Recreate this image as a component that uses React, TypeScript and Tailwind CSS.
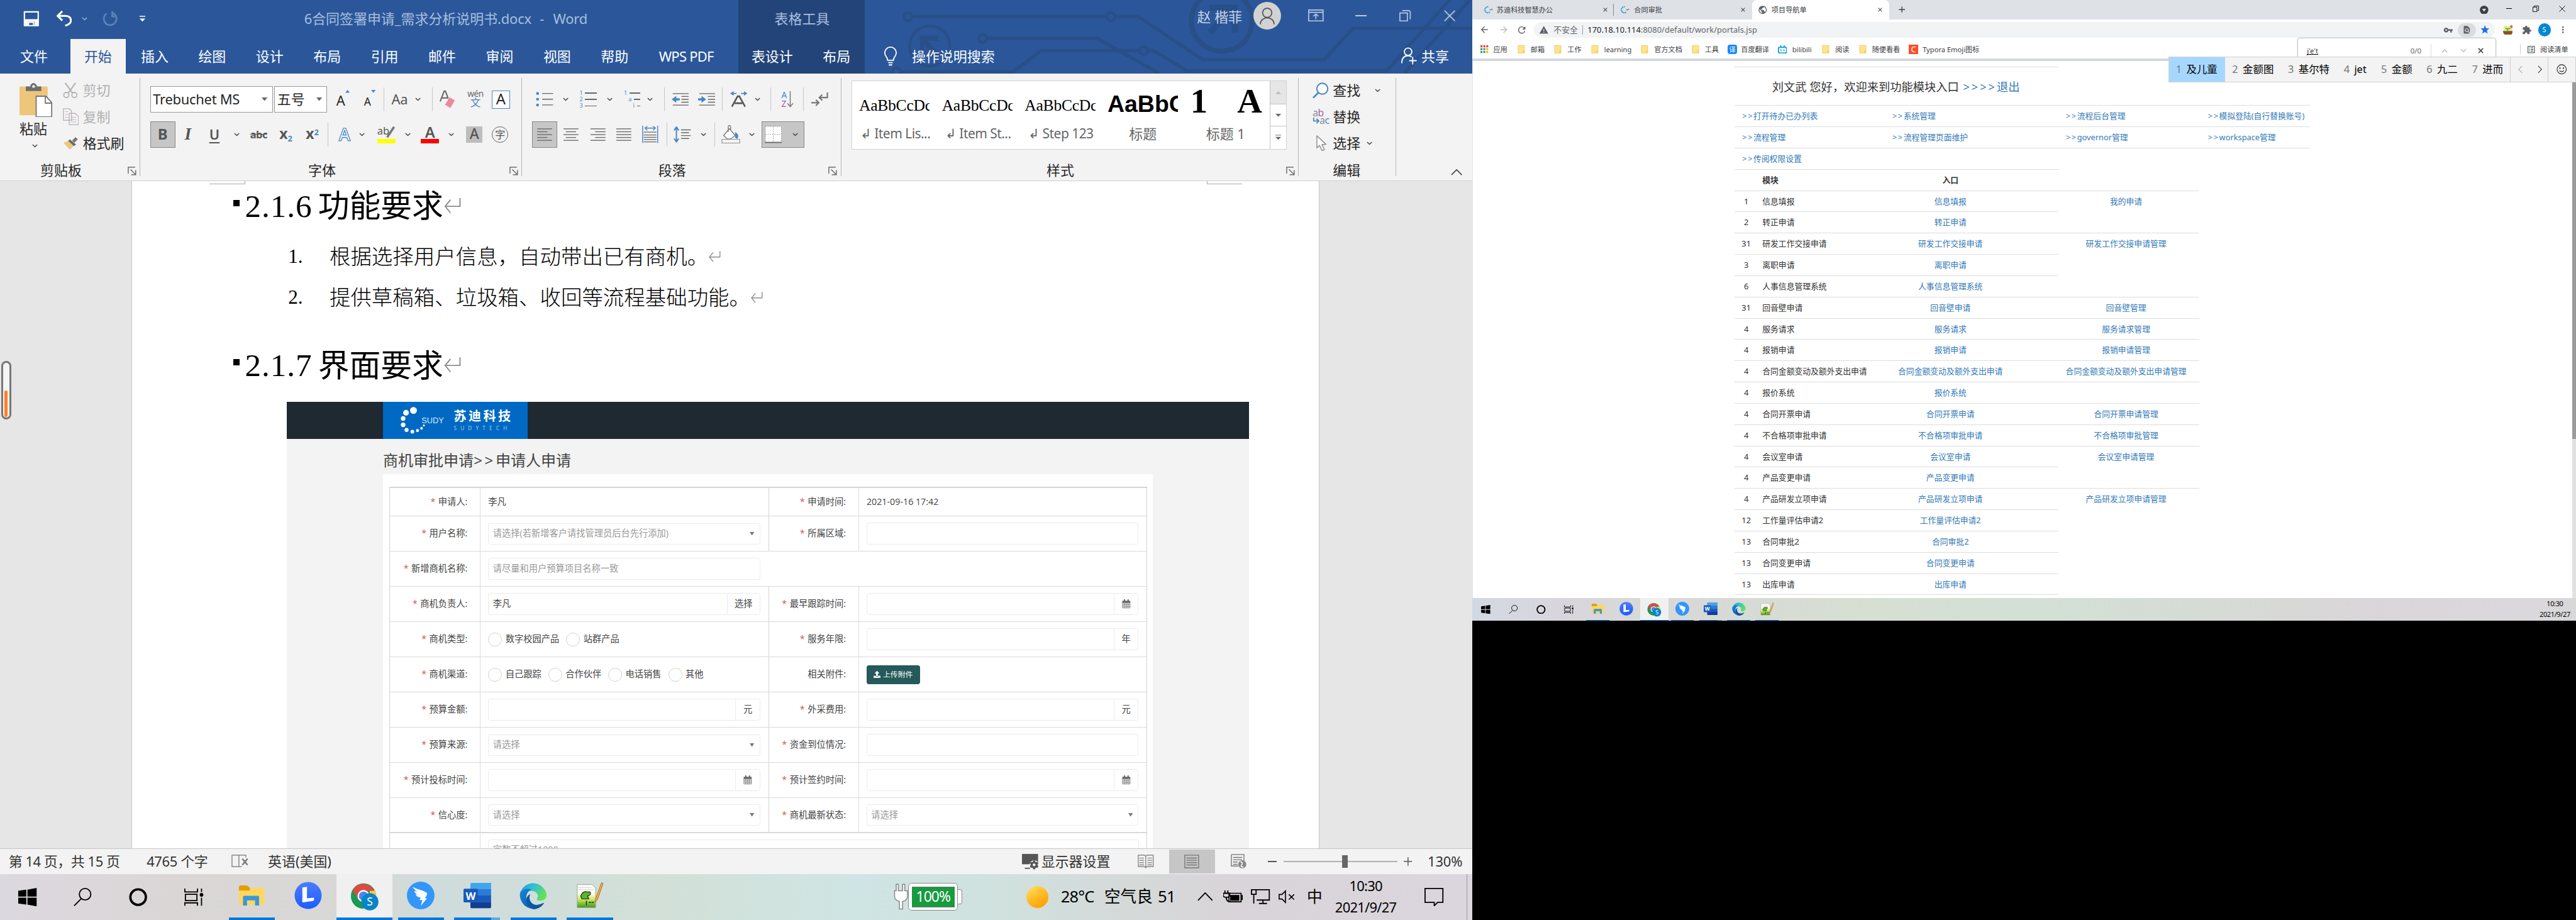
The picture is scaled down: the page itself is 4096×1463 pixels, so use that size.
import React from "react";
import {
  MdArrowBack, MdArrowForward, MdRefresh, MdWarning, MdVpnKey, MdFindInPage, MdStar,
  MdExtension, MdMoreVert, MdPublic, MdClose, MdAdd, MdOutlineListAlt,
} from "react-icons/md";
import { FaUpload, FaCog } from "react-icons/fa";

type Kids = { children?: React.ReactNode };

/** A fixed-width slot of a toolbar row. */
function C({ w, className = "", children }: Kids & { w: string; className?: string }) {
  return <div className={`${w} shrink-0 flex items-center whitespace-nowrap ${className}`}>{children}</div>;
}

function Svg({ w, h, vb, className = "", children }: Kids & { w: number; h: number; vb?: string; className?: string }) {
  return (
    <svg width={w} height={h} viewBox={vb ?? `0 0 ${w} ${h}`} fill="none" className={`shrink-0 ${className}`}>
      {children}
    </svg>
  );
}

const Chev = ({ c = "#444" }: { c?: string }) => (
  <Svg w={10} h={6}><path d="M1 1l4 4 4-4" stroke={c} strokeWidth="1.5" /></Svg>
);
const Launcher = () => (
  <Svg w={15} h={15}><path d="M1 12V1h12M5 5l8 8M14 6v8H6" stroke="#555" strokeWidth="1.4" /></Svg>
);
const VSep = () => <div className="h-[42px] w-[1px] bg-[#c6c6c6]" />;
const Return = ({ s }: { s: number }) => (
  <Svg w={s} h={s} vb="0 0 30 30"><path d="M28 2v14H3M12 5L3 16l9 11" stroke="#8c8c8c" strokeWidth="2" /></Svg>
);

/* ------------------------------------------------------------------ Word */

function Circuit() {
  return (
    <Svg w={1056} h={128} vb="1504 0 1056 128" className="absolute left-[1504px] top-0">
      <g stroke="#294f88" strokeWidth="6">
        <circle cx="1579" cy="29" r="7" strokeWidth="5" />
        <path d="M1586 29H1925M1939 29h41L2092 104H2303L2353 49H2560" />
        <circle cx="1932" cy="29" r="7" strokeWidth="5" />
        <circle cx="1709" cy="67" r="7" strokeWidth="5" />
        <path d="M1716 67H1909L2015 127" />
        <circle cx="1559" cy="125" r="7" strokeWidth="5" />
        <path d="M1566 125H1762L1811 88H1981M1997 88h9L2064 123H2412L2521 0M2443 127L2560 -4" />
        <circle cx="1989" cy="88" r="7" strokeWidth="5" />
        <circle cx="1617" cy="80" r="35" strokeWidth="5" />
        <circle cx="2125" cy="36" r="53" strokeWidth="9" />
      </g>
      <path d="M1600 62h32v9h-18l20 22-8 8-19-23v21h-7z" fill="#294f88" />
      <path d="M2103 8h50v49h-11V24l-34 37-8-8 32-34h-29z" fill="#294f88" />
    </Svg>
  );
}

function TitleBar() {
  return (
    <div className="relative h-[128px] bg-[#2b579a] text-white text-[24px] leading-none">
      <Circuit />
      <div className="absolute left-[1284px] top-0 h-[128px] w-[220px] bg-[#234478]" />
      <div className="relative flex h-[64px] pt-[2px]">
        <C w="w-[40px]" />
        <C w="w-[57px]">
          <Svg w={28} h={28}><path d="M2 2h24v24H2zM2 16h24M9 26v-6h9v6" stroke="#fff" strokeWidth="2.4" /><path d="M3 16h22v10h-5v-7H8v7H3z" fill="#fff" /></Svg>
        </C>
        <C w="w-[45px]">
          <Svg w={28} h={28}><path d="M3 9h13c7 0 10 4 10 8s-4 8-10 9M11 1L3 9l8 8" stroke="#fff" strokeWidth="3.4" /></Svg>
        </C>
        <C w="w-[35px]"><Chev c="#9db6da" /></C>
        <C w="w-[65px]">
          <Svg w={28} h={28}><path d="M19 4a11 11 0 1 1-11 1M18 1v9h8" stroke="#5c80b8" strokeWidth="3" /></Svg>
        </C>
        <C w="w-[287px]"><Svg w={12} h={12}><path d="M1 1h10" stroke="#fff" strokeWidth="1.6" /><path d="M1 5h10l-5 5z" fill="#fff" /></Svg></C>
        <C w="w-[818px]" className="text-[#a9bfdf]">
          6合同签署申请_需求分析说明书<span className="tracking-[-0.2px]">.docx</span><span className="whitespace-pre tracking-[1px]">{"  -  "}</span><span className="tracking-[-0.2px]">Word</span>
        </C>
        <C w="w-[735px]" className="text-[#a9bfdf]">表格工具</C>
        <C w="w-[98px]" className="text-[#c5d3e8] pb-2">赵 楷菲</C>
        <C w="w-[95px]" className="pb-3">
          <Svg w={48} h={48}><circle cx="24" cy="24" r="24" fill="#d2d2d2" /><circle cx="24" cy="19" r="8" stroke="#555" strokeWidth="2" /><path d="M12 39c0-15 24-15 24 0" stroke="#555" strokeWidth="2" /></Svg>
        </C>
        <C w="w-[82px]" className="pb-3"><Svg w={27} h={21}><path d="M1 1h25v19H1zM1 5h25M13.500 17V8M9 12l4.500-4 4.500 4" stroke="#b9cae4" strokeWidth="1.800" /></Svg></C>
        <C w="w-[77px]" className="pb-3"><div className="h-[2px] w-[20px] bg-[#b9cae4]" /></C>
        <C w="w-[77px]" className="pb-3"><Svg w={20} h={20}><path d="M1 5h13v14H1zM5 1h11q3 0 3 3v12" stroke="#b9cae4" strokeWidth="1.800" /></Svg></C>
        <C w="w-[30px]" className="pb-3"><Svg w={20} h={20}><path d="M1 1l18 18M19 1L1 19" stroke="#b9cae4" strokeWidth="1.800" /></Svg></C>
      </div>
      <div className="relative flex h-[64px] pt-[4px]">
        <C w="w-[122px]" className="pl-[35px]">文件</C>
        <C w="w-[97px]" className="justify-center bg-[#f3f3f3] text-[#2b579a]">开始</C>
        {["插入", "绘图", "设计", "布局", "引用", "邮件", "审阅", "视图", "帮助"].map((t) => (
          <C key={t} w="w-[100px]" className="justify-center">{t}</C>
        ))}
        <C w="w-[188px]" className="pl-[27px] tracking-[-0.8px]">WPS PDF</C>
        <C w="w-[124px]">表设计</C>
        <C w="w-[106px]">布局</C>
        <C w="w-[49px]">
          <Svg w={24} h={34}><path d="M7 24c0-6-5-7-5-13a10 10 0 0 1 20 0c0 6-5 7-5 13zM8 28h8M9 32h6" stroke="#fff" strokeWidth="2" /></Svg>
        </C>
        <C w="w-[851px]">操作说明搜索</C>
        <C w="w-[35px]">
          <Svg w={28} h={31}><circle cx="12" cy="8" r="6.500" stroke="#fff" strokeWidth="2" /><path d="M1 28c0-9 4-13 11-13 3 0 5 1 6 2M20 17v13M14 23.500h13" stroke="#fff" strokeWidth="2" /></Svg>
        </C>
        <C w="w-[60px]">共享</C>
      </div>
    </div>
  );
}

function Group({ w, label, labelPad, launcher, children }: Kids & { w: string; label: string; labelPad: string; launcher?: string }) {
  return (
    <div className={`${w} shrink-0 flex`}>
      <div className="flex-1 flex flex-col relative">
        <div className="h-[151px] flex flex-col">{children}</div>
        <div className={`h-[34px] flex items-center ${labelPad}`}>{label}</div>
        {launcher && <div className={`absolute bottom-[9px] ${launcher}`}><Launcher /></div>}
      </div>
      <div className="my-2 w-[1px] bg-[#b4b4b4]" />
    </div>
  );
}

function Lines({ n, align = "l" }: { n: number; align?: string }) {
  const widths = [26, 18, 26, 18, 26];
  return (
    <Svg w={26} h={22}>
      {widths.slice(0, n).map((lw, i) => {
        const len = align === "j" ? 26 : lw;
        const x = align === "l" || align === "j" ? 0 : align === "c" ? (26 - len) / 2 : 26 - len;
        return <path key={i} d={`M${x} ${1 + i * 5}h${len}`} stroke="#6a6a6a" strokeWidth="1.5" />;
      })}
    </Svg>
  );
}

function Ribbon() {
  return (
    <div className="flex h-[187px] bg-[#f3f3f3] border-b-2 border-[#cfcfcf] text-[24px] leading-none text-[#262626]">
      <Group w="w-[244px]" label="剪贴板" labelPad="pl-[70px]" launcher="right-[6px]">
        <div className="flex pt-[6px]">
          <div className="w-[109px] pl-[34px] flex flex-col pt-[10px]">
            <Svg w={58} h={60}>
              <rect x="0" y="6" width="49" height="50" rx="2" fill="#eec67b" />
              <path d="M11 6h8v-2q5-8 11 0v2h8v8H11z" fill="#6d6d6d" /><circle cx="24.500" cy="6" r="2.500" fill="#eee" />
              <path d="M29 23h17l10 11v25H29z" fill="#fff" stroke="#777" strokeWidth="2" /><path d="M45 23v12h11" stroke="#777" strokeWidth="2" />
            </Svg>
            <div className="mt-2">粘贴</div>
            <div className="mt-[15px] pl-[22px]"><Chev /></div>
          </div>
          <div>
            <div className="flex h-[46px] items-center text-[#b0b0b0]">
              <C w="w-[35px]"><Svg w={26} h={28}><path d="M4 1l13 18M22 1L9 19" stroke="#b5b5b5" strokeWidth="2.500" /><circle cx="6" cy="22" r="4.500" stroke="#b5b5b5" strokeWidth="2" /><circle cx="20" cy="22" r="4.500" stroke="#b5b5b5" strokeWidth="2" /></Svg></C>剪切
            </div>
            <div className="flex h-[46px] items-center text-[#b0b0b0]">
              <C w="w-[35px]"><Svg w={28} h={30}><path d="M1 1h10l4 4v16H1zM11 9h10l6 5v15H11z" fill="#f5f2f5" stroke="#b9b3b9" strokeWidth="1.500" /><path d="M4 6h5M4 11h5M4 16h5M14 16h9M14 20h9M14 24h9" stroke="#b9b3b9" /></Svg></C>复制
            </div>
            <div className="flex h-[46px] items-center">
              <C w="w-[35px]"><Svg w={28} h={24}><path d="M16 7l6-6 4 4-6 6z" fill="#777" /><path d="M12 5l11 9-4 3-10-9z" fill="#6d6d6d" /><path d="M1 11l8-3 9 9-6 6z" fill="#eec67b" /></Svg></C>格式刷
            </div>
          </div>
        </div>
      </Group>

      <Group w="w-[664px]" label="字体" labelPad="pl-[292px]" launcher="right-[6px]">
        <div className="mt-[22px] flex h-[46px]">
          <C w="w-[17px]" />
          <C w="w-[216px]">
            <div className="flex h-[46px] w-[214px] items-center justify-between border-2 border-[#999] bg-white pl-1 pr-[9px]">
              <span className="tracking-[-0.3px]">Trebuchet MS</span><Svg w={10} h={6}><path d="M0 0h10l-5 6z" fill="#666" /></Svg>
            </div>
          </C>
          <C w="w-[108px]">
            <div className="flex h-[46px] w-[92px] items-center justify-between border-2 border-[#999] bg-white pl-1 pr-[8px]">
              五号<Svg w={10} h={6}><path d="M0 0h10l-5 6z" fill="#666" /></Svg>
            </div>
          </C>
          <C w="w-[48px]"><span className="text-[24px] pt-1">A</span><Svg w={8} h={5} className="-mt-7"><path d="M0 5h8l-4-5z" fill="#4a86c5" /></Svg></C>
          <C w="w-[34px]"><span className="text-[19px] pt-2">A</span><Svg w={8} h={5} className="-mt-7"><path d="M0 0h8l-4 5z" fill="#4a86c5" /></Svg></C>
          <C w="w-[14px]"><VSep /></C>
          <C w="w-[41px]" className="text-[#555]"><span className="text-[24px] tracking-[-0.5px]">Aa</span></C>
          <C w="w-[29px]"><Chev /></C>
          <C w="w-[14px]"><VSep /></C>
          <C w="w-[48px]"><Svg w={32} h={34}><path d="M1 20L8 2h2l7 18M4 14h10" stroke="#666" strokeWidth="2.200" /><path d="M17 12l10 6-8 14-10-6z" fill="#ea8a9c" stroke="#f3f3f3" /></Svg></C>
          <C w="w-[42px]"><div className="flex flex-col items-center text-[#666]"><span className="text-[15px] leading-[12px] tracking-[-0.5px]">wén</span><span className="text-[18px] leading-[18px] text-[#4a86c5]">文</span></div></C>
          <C w="w-[32px]"><div className="flex h-[32px] w-[32px] items-center justify-center border-2 border-[#4a86c5] bg-white text-[26px]">A</div></C>
        </div>
        <div className="mt-[15px] flex h-[46px] text-[#555]">
          <C w="w-[17px]" />
          <C w="w-[60px]"><div className="flex h-[46px] w-[44px] items-center justify-center border-2 border-[#888] bg-[#c6c6c6] text-[26px] font-bold">B</div></C>
          <C w="w-[43px]"><span className="font-['Liberation_Serif'] italic font-bold text-[30px]">I</span></C>
          <C w="w-[43px]"><span className="text-[24px] font-semibold underline decoration-2 underline-offset-4">U</span></C>
          <C w="w-[28px]"><Chev /></C>
          <C w="w-[51px]"><span className="text-[18px] font-bold line-through tracking-[-0.5px]">abc</span></C>
          <C w="w-[46px]"><span className="text-[25px] font-bold">x<sub className="text-[14px] text-[#4a86c5]">2</sub></span></C>
          <C w="w-[38px]"><span className="text-[25px] font-bold">x<sup className="text-[14px] text-[#4a86c5]">2</sup></span></C>
          <C w="w-[17px]"><VSep /></C>
          <C w="w-[38px]"><Svg w={24} h={26}><path d="M2 24L10 2h4l8 22h-4l-2-6H8l-2 6zM9 14h6l-3-8z" fill="#fff" stroke="#4a86c5" strokeWidth="1.500" /></Svg></C>
          <C w="w-[31px]"><Chev /></C>
          <C w="w-[48px]"><div className="w-[32px]"><div className="relative h-[23px] text-[18px]">ab<Svg w={18} h={22} className="absolute right-0 top-0"><path d="M16 2L4 20" stroke="#777" strokeWidth="4" /></Svg></div><div className="h-[8px] bg-[#ff0]" /></div></C>
          <C w="w-[28px]"><Chev /></C>
          <C w="w-[48px]"><div className="w-[32px] text-center"><div className="h-[23px] text-[26px] leading-[22px] font-semibold">A</div><div className="h-[8px] bg-[#f00]" /></div></C>
          <C w="w-[31px]"><Chev /></C>
          <C w="w-[45px]"><div className="flex h-[28px] w-[28px] items-center justify-center bg-[#bdbdbd] text-[25px] font-medium">A</div></C>
          <C w="w-[30px]"><div className="flex h-[28px] w-[28px] items-center justify-center rounded-full border-[1.5px] border-[#666] text-[18px]">字</div></C>
        </div>
      </Group>

      <Group w="w-[555px]" label="段落" labelPad="pl-[237px]" launcher="right-[6px]">
        <div className="mt-[22px] flex h-[46px]">
          <C w="w-[24px]" />
          <C w="w-[47px]"><Svg w={30} h={28}><path d="M11 4h19M11 14h19M11 24h19" stroke="#666" strokeWidth="1.500" /><circle cx="3" cy="4" r="2.500" fill="#4a86c5" /><circle cx="3" cy="14" r="2.500" fill="#4a86c5" /><circle cx="3" cy="24" r="2.500" fill="#4a86c5" /></Svg></C>
          <C w="w-[29px]"><Chev /></C>
          <C w="w-[47px]"><div className="flex flex-col gap-[2px] text-[10px] leading-[9px] text-[#4a86c5]">{["1", "2", "3"].map((n) => <div key={n} className="flex items-center gap-1">{n}<span className="h-[1.5px] w-[20px] bg-[#666]" /></div>)}</div></C>
          <C w="w-[30px]"><Chev /></C>
          <C w="w-[41px]"><div className="flex flex-col gap-[2px] text-[10px] leading-[9px] text-[#4a86c5]"><div className="flex items-center gap-1">1<span className="h-[1.5px] w-[19px] bg-[#666]" /></div><div className="flex items-center gap-1 pl-[8px]">a<span className="h-[1.5px] w-[11px] bg-[#666]" /></div><div className="flex items-center gap-1 pl-[16px]">i<span className="h-[1.5px] w-[6px] bg-[#666]" /></div></div></C>
          <C w="w-[29px]"><Chev /></C>
          <C w="w-[13px]"><VSep /></C>
          <C w="w-[46px]"><Svg w={30} h={24}><path d="M2 2h28M17 7h13M17 12h13M17 17h13M2 22h28" stroke="#666" strokeWidth="1.500" /><path d="M0 12l8-6v4h6v4H8v4z" fill="#4a86c5" /></Svg></C>
          <C w="w-[42px]"><Svg w={30} h={24}><path d="M2 2h28M17 7h13M17 12h13M17 17h13M2 22h28" stroke="#666" strokeWidth="1.500" /><path d="M14 12L6 6v4H0v4h6v4z" fill="#4a86c5" /></Svg></C>
          <C w="w-[14px]"><VSep /></C>
          <C w="w-[43px]"><Svg w={30} h={30}><path d="M3 28l10-18h3l10 18M8 22h13" stroke="#555" strokeWidth="2.800" /><path d="M0 5l6-4v8zM30 5l-6-4v8z" fill="#4a86c5" /><path d="M4 5h7M19 5h7" stroke="#4a86c5" strokeWidth="2" /></Svg></C>
          <C w="w-[27px]"><Chev /></C>
          <C w="w-[19px]"><VSep /></C>
          <C w="w-[38px]"><div className="flex items-center"><div className="flex flex-col text-[15px] leading-[15px]"><span className="text-[#4a86c5]">A</span><span className="text-[#9b5fb5]">Z</span></div><Svg w={12} h={28}><path d="M6 0v26M1 21l5 6 5-6" stroke="#777" strokeWidth="1.600" /></Svg></div></C>
          <C w="w-[14px]"><VSep /></C>
          <C w="w-[30px]"><Svg w={30} h={26}><path d="M28 1v9H14M19 5l-5 5 5 5M0 19h12M8 14l5 5-5 5" stroke="#777" strokeWidth="2.400" /></Svg></C>
        </div>
        <div className="mt-[15px] flex h-[46px]">
          <C w="w-[17px]" />
          <C w="w-[55px]"><div className="flex h-[46px] w-[44px] items-center justify-center border-2 border-[#888] bg-[#c6c6c6]"><Lines n={5} /></div></C>
          <C w="w-[47px]"><Lines n={5} align="c" /></C>
          <C w="w-[45px]"><Lines n={5} align="r" /></C>
          <C w="w-[45px]"><Lines n={5} align="j" /></C>
          <C w="w-[42px]"><Svg w={28} h={30}><path d="M3 11h22M3 16h22M3 20h22M3 24h22M3 28h22" stroke="#666" strokeWidth="1.400" /><path d="M1 0v30M27 0v30M5 4h18M9 1L5 4l4 4M19 1l4 3-4 4" stroke="#4a86c5" strokeWidth="1.600" /></Svg></C>
          <C w="w-[13px]"><VSep /></C>
          <C w="w-[47px]"><Svg w={30} h={28}><path d="M13 6h17M13 11h14M13 16h17M13 21h14" stroke="#666" strokeWidth="1.500" /><path d="M5 2v24M1 7l4-6 4 6M1 21l4 6 4-6" stroke="#4a86c5" strokeWidth="2.200" /></Svg></C>
          <C w="w-[24px]"><Chev /></C>
          <C w="w-[12px]"><VSep /></C>
          <C w="w-[48px]"><Svg w={34} h={32}><path d="M4 18L14 6l10 12-8 6H10zM12 12V2q2-3 4 0v6" fill="#fff" stroke="#777" strokeWidth="1.500" /><path d="M24 12q8 4 4 12l-4-2z" fill="#4a86c5" /><path d="M1 25h31v6H1z" fill="#fff" stroke="#999" strokeWidth="1.500" /></Svg></C>
          <C w="w-[22px]"><Chev /></C>
          <C w="w-[75px]"><div className="flex h-[46px] w-[74px] items-center justify-between border-2 border-[#888] bg-[#c6c6c6] pl-1 pr-[10px]"><Svg w={30} h={30}><path d="M1 1h28v28H1z" fill="#fff" /><path d="M1 1h28M1 1v28M29 1v28M15 1v28M1 15h28" stroke="#888" strokeDasharray="2 2" /><path d="M0 29h30" stroke="#666" strokeWidth="2" /></Svg><Chev /></div></C>
        </div>
      </Group>

      <Group w="w-[796px]" label="样式" labelPad="pl-[357px]" launcher="right-[6px]">
        <div className="ml-[18px] mt-[12px] flex h-[120px] w-[757px] border-2 border-[#d2d2d2] bg-white">
          <div className="flex flex-1 pl-[12px]">
            {[
              { s: "AaBbCcDc", l: "↲ Item Lis..." },
              { s: "AaBbCcDc", l: "↲ Item St..." },
              { s: "AaBbCcDc", l: "↲ Step 123" },
            ].map((x) => (
              <div key={x.l} className="w-[144px] shrink-0">
                <div className="flex h-[68px] w-[123px] items-end overflow-hidden pb-[10px] font-['Liberation_Serif'] text-[28px] leading-[32px] tracking-[-0.3px] text-black">{x.s}</div>
                <div className="flex h-[47px] w-[126px] items-center justify-center whitespace-nowrap text-[23px] tracking-[-0.6px] text-[#666]">{x.l}</div>
              </div>
            ))}
            <div className="w-[144px] shrink-0">
              <div className="flex h-[68px] w-[123px] items-end overflow-hidden pb-[6px] font-['Liberation_Sans'] text-[41px] font-bold leading-[46px] text-black">AaBbC</div>
              <div className="flex h-[47px] w-[123px] items-center justify-center text-[#666]">标题</div>
            </div>
            <div className="w-[136px] shrink-0">
              <div className="flex h-[68px] w-[125px] items-end justify-between font-['Liberation_Serif'] text-[60px] font-bold leading-[66px] text-black"><span>1</span><span>A</span></div>
              <div className="flex h-[47px] w-[123px] items-center justify-center text-[#666]">标题 1</div>
            </div>
          </div>
          <div className="flex w-[29px] shrink-0 flex-col border-l border-[#c4c4c4]">
            <div className="flex h-[41px] items-center justify-center border-b border-[#c4c4c4] bg-[#e6e6e6]"><Svg w={10} h={5}><path d="M0 5h10L5 0z" fill="#bbb" /></Svg></div>
            <div className="flex h-[38px] items-center justify-center border-b border-[#c4c4c4]"><Svg w={10} h={5}><path d="M0 0h10L5 5z" fill="#666" /></Svg></div>
            <div className="flex flex-1 items-center justify-center"><Svg w={10} h={10}><path d="M0 1h10" stroke="#666" /><path d="M0 4h10L5 9z" fill="#666" /></Svg></div>
          </div>
        </div>
      </Group>

      <Group w="w-[169px]" label="编辑" labelPad="pl-[59px]">
        <div className="pl-[24px] pt-[6px]">
          <div className="flex h-[46px]">
            <C w="w-[35px]"><Svg w={28} h={28}><circle cx="17" cy="11" r="9.500" fill="#fff" stroke="#4a86c5" strokeWidth="2.200" /><path d="M10 18L1 27" stroke="#4a86c5" strokeWidth="3" /></Svg></C>
            <C w="w-[73px]">查找</C><C w="w-[10px]"><Chev /></C>
          </div>
          <div className="flex h-[46px]">
            <C w="w-[35px]"><div className="text-[17px] leading-[13px] tracking-[-0.5px]"><div className="text-[#888]">a<span className="text-[#9b5fb5]">b</span></div><div className="text-[#888] flex"><Svg w={12} h={13}><path d="M2 1v6h8M7 3l4 4-4 4" stroke="#4a86c5" strokeWidth="2" /></Svg>a<span className="text-[#4a86c5]">c</span></div></div></C>
            <C w="w-[73px]">替换</C>
          </div>
          <div className="flex h-[46px]">
            <C w="w-[35px]" className="pl-[6px]"><Svg w={18} h={28}><path d="M1 1v21l5-4 4 9 4-2-4-9h7z" fill="#fff" stroke="#888" strokeWidth="1.500" /></Svg></C>
            <C w="w-[59px]">选择</C><C w="w-[10px]"><Chev /></C>
          </div>
        </div>
      </Group>
      <div className="flex flex-1 items-end justify-end pb-[9px] pr-[17px]"><Svg w={20} h={11}><path d="M1 10l9-9 9 9" stroke="#444" strokeWidth="1.800" /></Svg></div>
    </div>
  );
}

/* -------------------------------------------------- Form in the document */

type Ctl =
  | { k: "text"; v: string }
  | { k: "select"; v: string }
  | { k: "input"; v?: string; suffix?: React.ReactNode; sw?: string }
  | { k: "radio"; v: string[] }
  | { k: "upload" }
  | { k: "none" };

const Cal = () => (
  <Svg w={15} h={16}>
    <path d="M1 3h13v12H1zM1 6.500h13M4.300 6v9M7.500 6v9M10.700 6v9M1 9.500h13M1 12.300h13" stroke="#777" strokeWidth="1" />
    <path d="M1 3h13v3H1z" fill="#666" /><path d="M4.300 0v4M10.700 0v4" stroke="#666" strokeWidth="2" />
  </Svg>
);

function Control({ c }: { c: Ctl }) {
  switch (c.k) {
    case "text":
      return <span>{c.v}</span>;
    case "select":
      return (
        <div className="flex h-[37px] w-[473px] items-center justify-between rounded border border-[#ebebeb] pl-[7px] pr-[9px] text-[#999]">
          {c.v}<Svg w={8} h={6}><path d="M0 0h8l-4 6z" fill="#777" /></Svg>
        </div>
      );
    case "input":
      return (
        <div className="flex h-[38px] w-[473px] rounded border border-[#ebebeb]">
          <div className={`flex flex-1 items-center pl-[7px] ${c.v === "李凡" ? "text-[#444]" : "text-[#999]"}`}>{c.v}</div>
          {c.suffix && <div className={`flex items-center justify-center border-l border-[#ebebeb] ${c.sw ?? "w-[42px]"}`}>{c.suffix}</div>}
        </div>
      );
    case "radio":
      return (
        <div className="flex items-center gap-[12px]">
          {c.v.map((t) => (
            <div key={t} className="flex items-center gap-[6px]"><span className="h-[24px] w-[24px] rounded-full border-2 border-[#d3d3cc] bg-white" />{t}</div>
          ))}
        </div>
      );
    case "upload":
      return (
        <div className="flex h-[33px] w-[93px] items-center justify-center gap-1 rounded bg-[#25595a] text-[13px] text-white"><FaUpload className="h-[12px] w-[12px]" />上传附件</div>
      );
    default:
      return null;
  }
}

function Label({ t, req = true }: { t: string; req?: boolean }) {
  return (
    <div className="flex items-center justify-end border-r border-[#ddd] pr-[22px]">
      {req && <span className="mr-[5px] text-[#d9534f]">*</span>}{t}:
    </div>
  );
}

const FORM: [string, Ctl, string, Ctl][] = [
  ["申请人", { k: "text", v: "李凡" }, "申请时间", { k: "text", v: "2021-09-16 17:42" }],
  ["用户名称", { k: "select", v: "请选择(若新增客户请找管理员后台先行添加)" }, "所属区域", { k: "input" }],
  ["新增商机名称", { k: "input", v: "请尽量和用户预算项目名称一致" }, "", { k: "none" }],
  ["商机负责人", { k: "input", v: "李凡", suffix: "选择", sw: "w-[57px]" }, "最早跟踪时间", { k: "input", suffix: <Cal /> }],
  ["商机类型", { k: "radio", v: ["数字校园产品", "站群产品"] }, "服务年限", { k: "input", suffix: "年" }],
  ["商机渠道", { k: "radio", v: ["自己跟踪", "合作伙伴", "电话销售", "其他"] }, "相关附件", { k: "upload" }],
  ["预算金额", { k: "input", suffix: "元" }, "外采费用", { k: "input", suffix: "元" }],
  ["预算来源", { k: "select", v: "请选择" }, "资金到位情况", { k: "input" }],
  ["预计投标时间", { k: "input", suffix: <Cal /> }, "预计签约时间", { k: "input", suffix: <Cal /> }],
  ["信心度", { k: "select", v: "请选择" }, "商机最新状态", { k: "select", v: "请选择" }],
];

const DOTS = [[53, 15, 6], [40, 19, 5], [35, 29, 4], [35, 40, 4], [41, 49, 3.5], [51, 52, 3.2], [60, 50, 2.7], [67, 46, 2.3], [71, 41, 1.7]];

function Form() {
  return (
    <div className="ml-[269px] h-[900px] w-[1673px] bg-[#f3f3f3] font-['Open_Sans','Noto_Sans_CJK_SC',sans-serif] text-[#444]">
      <div className="flex h-[64px] bg-[#1f2932]">
        <div className="relative ml-[167px] flex w-[252px] bg-[#0069c3] text-white">
          <Svg w={80} h={64} className="absolute left-0 top-0">{DOTS.map(([x, y, r]) => <circle key={`${x}-${y}`} cx={x} cy={y} r={r} fill="#fff" />)}</Svg>
          <div className="w-[123px] pl-[67px] pt-[26px] font-['Liberation_Sans'] text-[14px] leading-none text-[#dcebfa]">SUDY</div>
          <div className="pt-[14px] leading-none">
            <div className="text-[22px] font-bold tracking-[3.700px]">苏迪科技</div>
            <div className="pt-[5px] text-[9px] tracking-[6.800px] text-[#a5cdf2]">SUDYTECH</div>
          </div>
        </div>
      </div>
      <div className="flex h-[62px] items-center pl-[167px] pt-[14px] text-[26.300px]">商机审批申请<span className="tracking-[4px]">&gt;&gt;</span>申请人申请</div>
      <div className="ml-[167px] h-[800px] w-[1339px] bg-white pl-[11px] pt-[22px] text-[15.600px] leading-none">
        <div className="w-[1318px] border-x border-t-[3px] border-[#d5d5d5]">
          {FORM.map(([a, ca, b, cb], i) => (
            <div key={a} className={`grid grid-cols-[158px_501px_157px_500px] border-b border-[#d9d9d9] ${i === 0 ? "h-[49px]" : "h-[61.250px]"} ${i === 9 ? "border-b-[3px]" : ""}`}>
              <Label t={a} />
              <div className={`flex items-center pl-[13px] ${b ? "border-r border-[#d5d5d5]" : ""}`}><Control c={ca} /></div>
              {b && <Label t={b} req={b !== "相关附件"} />}
              {b && <div className="flex items-center pl-[13px]"><Control c={cb} /></div>}
            </div>
          ))}
          <div className="grid h-[200px] grid-cols-[158px_1fr]">
            <div className="border-r border-[#ddd]" />
            <div className="px-[13px] pt-[11px]"><div className="h-[180px] rounded border border-[#ebebeb] pl-[7px] pt-[9px] text-[#999]">字数不超过1000</div></div>
          </div>
        </div>
      </div>
    </div>
  );
}

function Heading({ n, t }: { n: string; t: string }) {
  return (
    <div className="flex h-[76px] items-center pl-[176px] text-black leading-none">
      <div className="mb-[9px] mr-[9px] h-[11px] w-[11px] bg-black" />
      <span className="w-[127px] font-['Liberation_Serif'] text-[56px] tracking-[1px]">{n}</span>
      <span className="text-[54.500px] font-normal">{t}</span><Return s={31} />
    </div>
  );
}

function Document() {
  return (
    <div className="relative flex h-[1161px] overflow-hidden bg-[#e6e6e6]">
      <div className="absolute left-[2px] top-[313px] h-[102px] w-[18px] rounded-full border-4 border-[#777] bg-[#f5f5f5]">
        <div className="absolute bottom-[1px] left-[2px] h-[46px] w-[6px] rounded-full bg-[#ff7f27]" />
      </div>
      <div className="ml-[229px] h-full w-[2066px] shrink-0 border-x border-[#c8c8c8] bg-white">
        <div className="flex h-[5px]">
          <div className="ml-[134px] w-[63px] border-b border-r border-[#aaa]" />
          <div className="ml-[1672px] w-[61px] border-b border-l border-[#aaa]" />
        </div>
        <Heading n="2.1.6" t="功能要求" />
        <div className="text-[36.600px] font-light leading-none text-black">
          <div className="flex h-[100px] items-center pl-[271px]"><span className="w-[72px] font-['Liberation_Serif'] text-[34px]">1.</span>根据选择用户信息，自动带出已有商机。<Return s={22} /></div>
          <div className="flex h-[42px] items-center pl-[271px]"><span className="w-[72px] font-['Liberation_Serif'] text-[34px]">2.</span>提供草稿箱、垃圾箱、收回等流程基础功能。<Return s={22} /></div>
        </div>
        <div className="mt-[59px]"><Heading n="2.1.7" t="界面要求" /></div>
        <div className="mt-[26px]"><Form /></div>
      </div>
    </div>
  );
}

function StatusBar() {
  return (
    <div className="flex h-[44px] border-t-2 border-[#c6c6c6] bg-[#f3f3f3] text-[24px] leading-none text-[#333]">
      <C w="w-[15px]" />
      <C w="w-[240px]"><span className="tracking-[-0.5px]">第 14 页，共 15 页</span></C>
      <C w="w-[147px]"><span className="tracking-[-0.4px]">4765 个字</span></C>
      <C w="w-[64px]"><Svg w={30} h={24}><path d="M1 1h12v20H1zM13 1h12v4M13 21h5" stroke="#777" strokeWidth="1.400" /><path d="M19 7l9 11M28 7l-9 11" stroke="#777" strokeWidth="2.600" /></Svg></C>
      <C w="w-[1311px]">英语(美国)</C>
      <C w="w-[34px]"><div className="relative"><Svg w={30} h={28}><path d="M0 1h28v18H0z" fill="#555" /><path d="M5 26h9" stroke="#555" strokeWidth="2" /></Svg><FaCog className="absolute bottom-0 right-0 h-[16px] w-[16px] rounded-full bg-[#f3f3f3] text-[#555]" /></div></C>
      <C w="w-[168px]">显示器设置</C>
      <C w="w-[54px]"><Svg w={28} h={24}><path d="M1 1h11l2 2 2-2h11v20H16l-2 2-2-2H1zM14 3v20M3 6h8M3 10h8M3 14h8M3 18h8M17 6h8M17 10h8M17 14h8M17 18h8" stroke="#777" strokeWidth="1.300" /></Svg></C>
      <C w="w-[107px]"><div className="flex h-[42px] w-[80px] items-center justify-center bg-[#c6c6c6]"><Svg w={26} h={24}><path d="M1 1h24v22H1zM4 6h18M4 10h18M4 14h18M4 18h18" stroke="#777" strokeWidth="1.500" /></Svg></div></C>
      <C w="w-[65px]"><Svg w={28} h={26}><path d="M1 1h22v11M1 1v20h12M4 6h16M4 10h16M4 14h8M4 18h8" stroke="#777" strokeWidth="1.500" /><circle cx="20" cy="18" r="7" fill="#888" /><path d="M17 13q5 3 2 6t3 4" stroke="#eee" strokeWidth="2" /></Svg></C>
      <C w="w-[27px]"><div className="h-[2px] w-[15px] bg-[#555]" /></C>
      <C w="w-[209px]"><div className="flex h-[22px] w-[198px] items-center"><div className="h-[2px] w-[102px] bg-[#b0b0b0]" /><div className="h-[22px] w-[10px] bg-[#666]" /><div className="h-[2px] flex-1 bg-[#b0b0b0]" /></div></C>
      <C w="w-[42px]"><Svg w={15} h={15}><path d="M0 7.500h15M7.500 0v15" stroke="#555" strokeWidth="1.600" /></Svg></C>
      <C w="w-[65px]"><span className="tracking-[-0.2px]">130%</span></C>
    </div>
  );
}

/* --------------------------------------------------------------- Taskbar */

function Task({ on, active, twin, children }: Kids & { on?: boolean; active?: boolean; twin?: boolean }) {
  return (
    <div className={`flex w-[98px] shrink-0 flex-col items-center ${active ? "bg-[#f0f0f0]" : ""}`}>
      <div className="flex h-[76px] flex-1 items-center justify-center">{children}</div>
      <div className={`flex h-[4px] justify-end ${active ? "w-[98px]" : "w-[80px]"} ${on ? "bg-[#0078d7]" : ""}`}>
        {twin && <div className="h-full w-[16px] bg-[#5fa8e0]" />}
      </div>
    </div>
  );
}

function TaskIcons() {
  return (
    <>
      <C w="w-[96px]" className="justify-center"><Svg w={32} h={32}><path d="M0 5l14-2v12H0zM16 3l16-3v15H16zM0 17h14v12L0 27zM16 17h16v15l-16-3z" fill="#000" /></Svg></C>
      <C w="w-[96px]" className="justify-center"><Svg w={32} h={32}><circle cx="20" cy="11" r="10" stroke="#000" strokeWidth="2" /><path d="M13 19L1 31" stroke="#000" strokeWidth="2" /></Svg></C>
      <C w="w-[96px]" className="justify-center"><Svg w={32} h={32}><circle cx="16" cy="16" r="13.500" stroke="#000" strokeWidth="4" /></Svg></C>
      <C w="w-[101px]" className="justify-center pr-[3px]"><Svg w={34} h={32}><path d="M1 1v6h22V1M2 11h20v11H2zM1 31v-5h22v5M30 1v6M30 17v14" stroke="#000" strokeWidth="2" /><circle cx="30" cy="12" r="3.200" fill="#000" /></Svg></C>
      <Task on><Svg w={44} h={36}><path d="M0 3q0-3 3-3h11l5 4v8H0z" fill="#e2a000" /><path d="M0 9h18l4-5h19q3 0 3 3v24q0 3-3 3H3q-3 0-3-3z" fill="#ffd75e" /><path d="M7 35V20q0-2 2-2h24q2 0 2 2v15h-7v-9H14v9z" fill="#3b97da" /></Svg></Task>
      <Task><Svg w={48} h={48}><defs><linearGradient id="lg" x1="0" y1="0" x2="0" y2="1"><stop stopColor="#4c7dfb" /><stop offset="1" stopColor="#1c5cff" /></linearGradient></defs><circle cx="24" cy="24" r="23.500" fill="url(#lg)" /><path d="M14 10l8-1v20l12-1q2 6-4 6l-15 2q-2-1-1-4z" fill="#fff" /></Svg></Task>
      <Task on active>
        <Svg w={50} h={50} className="mt-[4px]">
          <circle cx="23" cy="24" r="22" fill="#1a9a53" /><path d="M42 13a22 22 0 0 1-19 33l10-17 1-16z" fill="#ffcd42" /><path d="M4 13l10 17 4-15h24a22 22 0 0 0-38-2z" fill="#dd4b3e" />
          <circle cx="23" cy="24" r="10.500" fill="#fff" /><circle cx="23" cy="24" r="8" fill="#4688f1" /><circle cx="34" cy="34" r="15" fill="#0a84c6" />
          <text x="34" y="41" textAnchor="middle" fontSize="19" fontFamily="Noto Sans" fill="#fff">S</text>
        </Svg>
      </Task>
      <Task on><Svg w={48} h={48}><circle cx="24" cy="24" r="24" fill="#3296fa" /><path d="M10 9c8 5 20 6 25 11 1 3-4 9-4 9h4L24 42l3-10h-5l2-4c-5-1-8-3-9-6l5 1c-4-2-7-4-7-7l6 2c-5-3-8-6-9-9z" fill="#fff" /></Svg></Task>
      <Task on twin><Svg w={48} h={44}><path d="M14 0h34v11H12V2q0-2 2-2z" fill="#41a5ee" /><path d="M12 11h36v11H12z" fill="#2b7cd3" /><path d="M12 22h36v11H12z" fill="#185abd" /><path d="M12 33h36v9q0 2-2 2H14q-2 0-2-2z" fill="#103f91" /><rect y="10" width="25" height="24" rx="2" fill="#185abd" /><text x="12.500" y="29" textAnchor="middle" fontSize="18" fontWeight="700" fontFamily="Noto Sans" fill="#fff">W</text></Svg></Task>
      <Task on>
        <Svg w={48} h={48}>
          <defs><linearGradient id="eg" x1="0" y1="0" x2="1" y2="0.4"><stop stopColor="#1a9bdb" /><stop offset=".5" stopColor="#2fc0d6" /><stop offset="1" stopColor="#62e05a" /></linearGradient><linearGradient id="eb" x1="0" y1="0" x2="1" y2="1"><stop stopColor="#1883d8" /><stop offset="1" stopColor="#0b5aa8" /></linearGradient></defs>
          <path d="M1 21A23.500 23.500 0 0 1 47 22c1 7-5 12-12 11-4 0-6-2-4-4 3-5-1-13-10-13S4 15 1 21z" fill="url(#eg)" />
          <path d="M1 20c3-7 13-9 20-6-6 2-10 8-9 16 1 9 9 14 17 17A24 24 0 0 1 1 20z" fill="url(#eb)" /><path d="M19 22c-5 9 3 21 14 18 5-1 8-3 10-3-4 7-11 11-19 11-8-3-12-9-12-16 0-5 3-9 7-10z" fill="#0c59a4" />
        </Svg>
      </Task>
      <Task on>
        <Svg w={48} h={46}><defs><linearGradient id="ng" x1="0" y1="0" x2="0" y2="1"><stop stopColor="#fff" /><stop offset=".4" stopColor="#fbfdec" /><stop offset=".65" stopColor="#c9e85a" /><stop offset="1" stopColor="#3a9a1a" /></linearGradient></defs><path d="M2 4h26l6 6v34H2z" fill="url(#ng)" stroke="#999" /><path d="M3 9h24M3 13h28" stroke="#ccc" /><path d="M8 24q4-10 12-7 6-2 5 4-3 3-5 3l2 5H10z" fill="#5ab82b" stroke="#222" strokeWidth="1.300" /><path d="M18 40v-8M22 35h4M27 35h4" stroke="#222" strokeWidth="1.600" /><path d="M44 1l3 1-10 29-4 4 1-6z" fill="#f4b04c" stroke="#a5651b" /></Svg>
      </Task>
    </>
  );
}

function Clock() {
  return <div className="flex flex-col items-center text-[24px] leading-[38px] tracking-[-0.8px] text-black"><span>10:30</span><span>2021/9/27</span></div>;
}

function WordTaskbar() {
  return (
    <div className="flex h-[80px] bg-[linear-gradient(90deg,#dcd8df_0%,#dad6d6_12%,#d7d8d5_24%,#cfdcdc_30%,#d2e0d8_45%,#cfe5e3_58%,#d0e1de_68%,#d5d9d8_77%,#d9d4d9_84%,#dbd6dd_100%)] leading-none text-black">
      <TaskIcons />
      <C w="w-[477px]" />
      <C w="w-[28px]"><Svg w={28} h={50} vb="0 0 30 50"><path d="M7 2h4v12h8V2h4v12h5v10q0 8-9 10v14h-6V34q-9-2-9-10V14h3z" fill="#fff" stroke="#8a8a8a" strokeWidth="1.800" /></Svg></C>
      <C w="w-[205px]">
        <div className="flex h-[48px] w-[86px] items-center justify-center rounded-md border-2 border-[#8a8a8a] bg-white"><div className="flex h-[36px] w-[74px] items-center justify-center border-y-2 border-[#777] bg-[#169b3f] text-[25px] tracking-[-1px] text-white">100%</div></div>
        <div className="h-[26px] w-[7px] rounded-r border-2 border-l-0 border-[#8a8a8a] bg-white" />
      </C>
      <C w="w-[60px]"><div className="h-[38px] w-[38px] rounded-full bg-[linear-gradient(150deg,#ffe36b,#ffb61f_55%,#ff9800)]" /></C>
      <C w="w-[238px]" className="text-[28px]"><span className="mr-[18px] tracking-[-1px]">28°C</span>空气良<span className="ml-[9px] tracking-[-0.7px]">51</span></C>
      <C w="w-[45px]"><Svg w={27} h={15}><path d="M1 14L13.500 1 26 14" stroke="#000" strokeWidth="2" /></Svg></C>
      <C w="w-[48px]"><Svg w={34} h={24}><path d="M10 6h21v15H10zM31 10h2v7h-2" stroke="#000" strokeWidth="1.800" /><path d="M12 9h16v10H12z" fill="#000" /><path d="M3 1v5M8 1v5M0 6h11v4q0 3-5 3-6 0-6-3zM5 12q0 9 8 9" stroke="#000" strokeWidth="2" /></Svg></C>
      <C w="w-[48px]"><Svg w={34} h={28}><path d="M10 2h22v18H10M21 20v6M14 26h14M1 2h8v8H1zM5 10v16" stroke="#000" strokeWidth="2" /></Svg></C>
      <C w="w-[49px]"><Svg w={29} h={24}><path d="M1 8h5l6-6v20l-6-6H1z" stroke="#000" strokeWidth="1.800" /><path d="M18 8l9 9M27 8l-9 9" stroke="#000" strokeWidth="1.800" /></Svg></C>
      <C w="w-[49px]" className="text-[27px]">中</C>
      <C w="w-[156px]"><Clock /></C>
      <C w="w-[73px]"><Svg w={33} h={32}><path d="M1 1h31v24h-9l-6 6v-6H1z" stroke="#000" strokeWidth="2" /></Svg></C>
      <div className="w-[1px] bg-[#999]" />
    </div>
  );
}

/* ---------------------------------------------------------------- Chrome */

const Swirl = () => (
  <Svg w={17} h={14}>
    <path d="M8 2A5.200 5.200 0 1 0 11 11" stroke="#0b8fd0" strokeWidth="2.300" strokeDasharray="1.800 1.200" /><path d="M10 7h6M12 9l3-4" stroke="#8a8f99" strokeWidth="1.200" />
  </Svg>
);
const Folder = () => <Svg w={13} h={14}><path d="M1 0.500h11v13H1z" fill="#ffe48c" stroke="#edc95a" /><path d="M9 9h3v4H9z" fill="#f6cf5f" /></Svg>;

function TabStrip() {
  return (
    <div className="flex h-[34px] bg-[#dee1e6] text-[12.200px] leading-none text-[#3c4043]">
      <C w="w-[20px]" />
      <C w="w-[23px]"><Swirl /></C>
      <C w="w-[183px]">苏迪科技智慧办公</C>
      <C w="w-[20px]"><MdClose className="h-[12px] w-[12px]" /></C>
      <C w="w-[12px]"><div className="h-[20px] w-[1px] bg-[#888]" /></C>
      <C w="w-[24px]"><Swirl /></C>
      <C w="w-[183px]">合同审批</C>
      <C w="w-[22px]"><MdClose className="h-[12px] w-[12px]" /></C>
      <div className="flex w-[239px] shrink-0 rounded-t-lg bg-white">
        <C w="w-[34px]" className="pl-[10px]"><MdPublic className="h-[17px] w-[17px] text-[#5f6368]" /></C>
        <C w="w-[183px]">项目导航单</C>
        <C w="w-[20px]"><MdClose className="h-[12px] w-[12px]" /></C>
      </div>
      <C w="w-[1027px]" className="pl-[13px]"><MdAdd className="h-[18px] w-[18px]" /></C>
      <C w="w-[46px]"><Svg w={15} h={15}><circle cx="7.500" cy="7.500" r="7.500" fill="#3c4043" /><path d="M4 5.500h7l-3.500 5z" fill="#dee1e6" /></Svg></C>
      <C w="w-[46px]" className="pb-1"><div className="h-[1px] w-[10px] bg-black" /></C>
      <C w="w-[46px]" className="pb-1"><Svg w={11} h={11}><path d="M.5 2.500h7v8h-7zM2.500 2.500v-2h8v8h-2" stroke="#000" /></Svg></C>
      <C w="w-[20px]" className="pb-1"><Svg w={11} h={11}><path d="M.5.5l10 10M10.500.5l-10 10" stroke="#000" /></Svg></C>
    </div>
  );
}

function AddressBar() {
  return (
    <div className="flex h-[36px] items-center bg-white text-[14px] leading-none text-[#5f6368]">
      <C w="w-[13px]" />
      <C w="w-[33px]"><MdArrowBack className="h-[18px] w-[18px]" /></C>
      <C w="w-[31px]"><MdArrowForward className="h-[18px] w-[18px] text-[#bbb]" /></C>
      <C w="w-[31px]"><MdRefresh className="h-[19px] w-[19px]" /></C>
      <div className="flex h-[28px] w-[1671px] shrink-0 items-center rounded-full bg-[#f1f3f4]">
        <C w="w-[34px]" className="pl-[9px]"><MdWarning className="h-[17px] w-[17px]" /></C>
        <C w="w-[50px]">不安全</C>
        <C w="w-[9px]"><div className="h-[16px] w-[1px] bg-[#9aa0a6]" /></C>
        <C w="w-[1488px]"><span className="tracking-[0.1px]"><span className="text-[#202124]">170.18.10.114</span>:8080/default/work/portals.jsp</span></C>
        <C w="w-[25px]"><MdVpnKey className="h-[17px] w-[17px]" /></C>
        <C w="w-[39px]"><div className="flex h-[24px] w-[32px] items-center justify-center rounded-full bg-[#dadce0]"><MdFindInPage className="h-[16px] w-[16px]" /></div></C>
        <C w="w-[20px]"><MdStar className="h-[18px] w-[18px] text-[#1a73e8]" /></C>
      </div>
      <C w="w-[14px]" />
      <C w="w-[33px]"><Svg w={17} h={17}><path d="M1 2q0-1 1-1h13q1 0 1 1v8H1z" fill="#dff299" /><path d="M0 10h17v2l-2 4q-6 2-13 0l-2-4z" fill="#8c5223" /><path d="M8 10V7M8 7L4 5M8 7l5-2" stroke="#5fae2c" strokeWidth="2" /><circle cx="15" cy="2.500" r="2.500" fill="#ec5564" /></Svg></C>
      <C w="w-[28px]"><MdExtension className="h-[17px] w-[17px]" /></C>
      <C w="w-[34px]"><div className="flex h-[22px] w-[22px] items-center justify-center rounded-full bg-[#0288d1] text-[12px] text-white">S</div></C>
      <C w="w-[18px]"><MdMoreVert className="h-[18px] w-[18px]" /></C>
    </div>
  );
}

function BookmarkBar() {
  return (
    <div className="flex h-[32px] items-center bg-white text-[12.200px] leading-none text-[#3c4043]">
      <C w="w-[15px]" />
      <C w="w-[22px]"><Svg w={14} h={14}>{["#ea4335", "#ea4335", "#ea4335", "#34a853", "#4285f4", "#fbbc05", "#34a853", "#34a853", "#fbbc05"].map((c, i) => <rect key={i} x={(i % 3) * 5} y={Math.floor(i / 3) * 5} width="3.500" height="3.500" fill={c} />)}</Svg></C>
      <C w="w-[42px]">应用</C>
      <C w="w-[23px]"><Folder /></C><C w="w-[41px]">邮箱</C>
      <C w="w-[23px]"><Folder /></C><C w="w-[41px]">工作</C>
      <C w="w-[23px]"><Folder /></C><C w="w-[64px]">learning</C>
      <C w="w-[23px]"><Folder /></C><C w="w-[65px]">官方文档</C>
      <C w="w-[23px]"><Folder /></C><C w="w-[40px]">工具</C>
      <C w="w-[23px]"><div className="flex h-[16px] w-[16px] items-center justify-center rounded-sm bg-[#1b87f9] text-[11px] text-white">译</div></C><C w="w-[64px]">百度翻译</C>
      <C w="w-[25px]"><Svg w={16} h={15}><rect x="1" y="3.500" width="14" height="10" rx="2.500" stroke="#00a1d6" strokeWidth="2" /><path d="M4 0l2 3M12 0l-2 3M5.500 7v3M10.500 7v3" stroke="#00a1d6" strokeWidth="1.600" /></Svg></C><C w="w-[52px]">bilibili</C>
      <C w="w-[23px]"><Folder /></C><C w="w-[41px]">阅读</C>
      <C w="w-[23px]"><Folder /></C><C w="w-[64px]">随便看看</C>
      <C w="w-[24px]"><div className="flex h-[16px] w-[16px] items-center justify-center bg-[#fa4e2b] text-[14px] text-white">C</div></C>
      <C w="w-[1039px]"><span>Typora Emoji</span>图标</C>
      <C w="w-[11px]"><div className="h-[16px] w-[1px] bg-[#ccc]" /></C>
      <C w="w-[24px]"><MdOutlineListAlt className="h-[17px] w-[17px] text-[#5f6368]" /></C>
      <C w="w-[52px]">阅读清单</C>
    </div>
  );
}

const ROWS: [string, string, string?][] = [
  ["1", "信息填报", "我的申请"], ["2", "转正申请"], ["31", "研发工作交接申请", "研发工作交接申请管理"], ["3", "离职申请"],
  ["6", "人事信息管理系统"], ["31", "回音壁申请", "回音壁管理"], ["4", "服务请求", "服务请求管理"], ["4", "报销申请", "报销申请管理"],
  ["4", "合同金额变动及额外支出申请", "合同金额变动及额外支出申请管理"], ["4", "报价系统", ""], ["4", "合同开票申请", "合同开票申请管理"],
  ["4", "不合格项审批申请", "不合格项审批管理"], ["4", "会议室申请", "会议室申请管理"], ["4", "产品变更申请"],
  ["4", "产品研发立项申请", "产品研发立项申请管理"], ["12", "工作量评估申请2"], ["13", "合同审批2"], ["13", "合同变更申请"], ["13", "出库申请"],
];
const LINKS = [
  ["打开待办已办列表", "系统管理", "流程后台管理", "模拟登陆(自行替换账号)"],
  ["流程管理", "流程管理页面维护", "governor管理", "workspace管理"],
];
const PortalLink = ({ t }: { t: string }) => (
  <span className="whitespace-nowrap"><span className="tracking-[1.700px]">&gt;&gt;</span>{t}</span>
);

function Portal() {
  return (
    <div className="h-[934px] overflow-hidden bg-white pl-[457px] pt-[10px] text-[14px] leading-none text-[#333]">
      <div className="flex h-[67px] w-[563px] items-center whitespace-pre border-t border-[#ddd] pl-[65px] pt-[2px] text-[20px]">
        刘文武 您好，欢迎来到功能模块入口 <span className="pl-[2px] text-[#337ab7]"><span className="tracking-[3.200px]">&gt;&gt;&gt;&gt;</span>退出</span>
      </div>
      {LINKS.map((r) => (
        <div key={r[0]} className="grid h-[37px] w-[1000px] grid-cols-[261px_302px_247px_177px] items-center border-t border-[#ddd] pl-[13px] text-[#337ab7]">
          {r.map((t) => <PortalLink key={t} t={t} />)}
        </div>
      ))}
      <div className="flex h-[37px] w-[1000px] items-center border-t border-[#ddd] pl-[13px] text-[#337ab7]"><PortalLink t="传阅权限设置" /></div>
      <div className="flex h-[37px] w-[563px] items-center border-t border-[#ddd] font-bold">
        <span className="w-[187px] pl-[48px]">模块</span><span className="w-[376px] text-center">入口</span>
      </div>
      {ROWS.map(([n, a, b], i) => (
        <div key={i} className="flex h-[37px]">
          <div className="flex w-[563px] items-center border-t border-[#ddd]">
            <span className="w-[40px] text-center">{n}</span>
            <span className="w-[147px] whitespace-nowrap pl-[8px]">{a}</span>
            <span className="w-[376px] text-center text-[#337ab7]">{a}</span>
          </div>
          <div className={`flex w-[245px] items-center justify-center pr-[10px] text-[#337ab7] ${b !== undefined ? "border-t border-[#ddd]" : ""}`}>{b}</div>
        </div>
      ))}
      <div className="w-[563px] border-t border-[#ddd]" />
    </div>
  );
}

const CANDS: [string, string, string][] = [
  ["1", "及儿童", "w-[98px] bg-[#a6d8ff]"], ["2", "金额图", "w-[97px]"], ["3", "基尔特", "w-[97px]"], ["4", "jet", "w-[65px]"],
  ["5", "金额", "w-[79px]"], ["6", "九二", "w-[79px]"], ["7", "进而", "w-[78px]"],
];

function FindBox() {
  return (
    <div className="absolute left-[1436px] top-[66px] flex h-[36px] w-[345px] rounded-t border border-[#c4c7cc] bg-white pt-[9px] text-[12.500px] leading-none text-[#3c4043] shadow">
      <C w="w-[195px]" className="pl-[15px]"><span className="border-b-2 border-black">j'e't</span></C>
      <C w="w-[35px]" className="text-[#666]">0/0</C>
      <C w="w-[19px]"><div className="h-full w-[1px] bg-[#ddd]" /></C>
      <C w="w-[33px]"><Svg w={11} h={8}><path d="M1 7l4.500-5L10 7" stroke="#bbb" strokeWidth="1.600" /></Svg></C>
      <C w="w-[30px]"><Svg w={11} h={8}><path d="M1 1l4.500 5L10 1" stroke="#bbb" strokeWidth="1.600" /></Svg></C>
      <C w="w-[20px]"><Svg w={10} h={10}><path d="M1 1l8 8M9 1L1 9" stroke="#444" strokeWidth="1.800" /></Svg></C>
    </div>
  );
}

function Ime() {
  return (
    <div className="absolute left-[1211px] top-[98px] flex h-[45px] w-[709px] border border-[#d2d2d2] bg-[#f3f3f3] text-[18px] leading-none text-black">
      {CANDS.map(([n, t, w]) => (
        <div key={n} className={`${w} flex shrink-0 items-center gap-[8px] whitespace-nowrap pl-[12px]`}><span className="text-[#777]">{n}</span>{t}</div>
      ))}
      <div className="flex flex-1 items-center justify-between border-l border-[#ccc] pl-[13px] pr-[10px]">
        <Svg w={8} h={14}><path d="M7 1L1 7l6 6" stroke="#aaa" strokeWidth="1.200" /></Svg>
        <Svg w={8} h={14}><path d="M1 1l6 6-6 6" stroke="#333" strokeWidth="1.200" /></Svg>
      </div>
      <div className="flex w-[48px] items-center justify-center border-l border-[#ccc]">
        <Svg w={18} h={18}><circle cx="9" cy="9" r="8" stroke="#222" strokeWidth="1.200" /><circle cx="6" cy="7" r="1.200" fill="#222" /><circle cx="12" cy="7" r="1.200" fill="#222" /><path d="M5 11q4 4 8 0" stroke="#222" strokeWidth="1.200" /></Svg>
      </div>
    </div>
  );
}

function ChromeScreen() {
  return (
    <div className="relative w-[1920px] shrink-0">
      <TabStrip />
      <AddressBar />
      <BookmarkBar />
      <div className="h-[4px] bg-[#d3d7e0]" />
      <div className="relative">
        <Portal />
        <div className="absolute right-0 top-0 h-full w-[7px] bg-[#e1e1e1]"><div className="h-[657px] bg-[#9b9b9b]" /></div>
        <div className="absolute left-0 top-0 h-full w-[1px] bg-[#e5e5ea]" />
      </div>
      <FindBox />
      <Ime />
      <div className="flex h-[80px] w-[3840px] bg-[linear-gradient(90deg,#d2d8e3_0%,#d8d6dc_8%,#d8d9d6_22%,#d6dfd2_36%,#d3e0d6_52%,#d6dbd5_68%,#dad5d9_82%,#dbd8dd_95%,#d8d8d8_100%)] leading-none [zoom:0.5]">
        <TaskIcons />
        <div className="flex-1" />
        <div className="w-[117px]"><Clock /></div>
        <div className="w-[15px]" />
      </div>
    </div>
  );
}

export default function App() {
  return (
    <div className="h-[1463px] w-[4096px] overflow-hidden bg-black">
      <div className="flex h-[1600px] w-[4480px] overflow-hidden bg-black font-['Noto_Sans','Noto_Sans_CJK_SC',sans-serif] [zoom:0.9142857]">
        <div className="w-[2560px] shrink-0 overflow-hidden">
          <TitleBar />
          <Ribbon />
          <Document />
          <StatusBar />
          <WordTaskbar />
        </div>
        <ChromeScreen />
      </div>
    </div>
  );
}
